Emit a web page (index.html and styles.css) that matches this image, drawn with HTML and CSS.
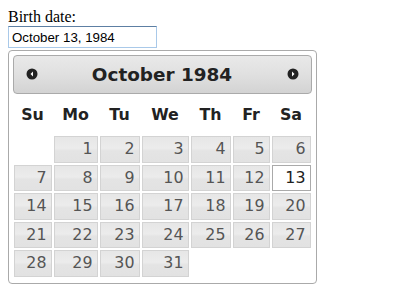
FILE: index.html
```html
<!DOCTYPE HTML>
<html>

<head>
  <meta charset="UTF-8">
  <title>Birth date</title>
  <link rel="stylesheet" href="styles.css">
</head>

<body>
  <div class="field">
    <label for="birth">Birth date:</label>
    <input id="birth" class="date-input" type="text" value="October 13, 1984">
  </div>

  <div class="picker">
    <div class="picker-head">
      <a class="nav prev" title="Prev">
        <svg width="12" height="12" viewBox="0 0 12 12"><circle cx="6" cy="6" r="5.5" fill="#222"/><path d="M7 3.5 L4.5 6 L7 8.5 Z" fill="#fff"/></svg>
      </a>
      <div class="picker-title">October 1984</div>
      <a class="nav next" title="Next">
        <svg width="12" height="12" viewBox="0 0 12 12"><circle cx="6" cy="6" r="5.5" fill="#222"/><path d="M5 3.5 L7.5 6 L5 8.5 Z" fill="#fff"/></svg>
      </a>
    </div>
    <table class="days">
      <colgroup>
        <col class="c1"><col class="c2"><col class="c3"><col class="c4"><col class="c5"><col class="c6"><col class="c7">
      </colgroup>
      <thead>
        <tr><th>Su</th><th>Mo</th><th>Tu</th><th>We</th><th>Th</th><th>Fr</th><th>Sa</th></tr>
      </thead>
      <tbody>
        <tr><td></td><td><a>1</a></td><td><a>2</a></td><td><a>3</a></td><td><a>4</a></td><td><a>5</a></td><td><a>6</a></td></tr>
        <tr><td><a>7</a></td><td><a>8</a></td><td><a>9</a></td><td><a>10</a></td><td><a>11</a></td><td><a>12</a></td><td><a class="active">13</a></td></tr>
        <tr><td><a>14</a></td><td><a>15</a></td><td><a>16</a></td><td><a>17</a></td><td><a>18</a></td><td><a>19</a></td><td><a>20</a></td></tr>
        <tr><td><a>21</a></td><td><a>22</a></td><td><a>23</a></td><td><a>24</a></td><td><a>25</a></td><td><a>26</a></td><td><a>27</a></td></tr>
        <tr><td><a>28</a></td><td><a>29</a></td><td><a>30</a></td><td><a>31</a></td><td></td><td></td><td></td></tr>
      </tbody>
    </table>
  </div>
</body>

</html>
```
FILE: styles.css
```css
body {
  margin: 8px;
  background: #fff;
  font-family: "Liberation Serif", serif;
  font-size: 16px;
}

.field label {
  display: block;
  line-height: 18px;
}

.date-input {
  display: block;
  box-sizing: border-box;
  width: 149px;
  height: 22px;
  margin: 0;
  padding: 1px 3px;
  border: 1px solid #a9c9e9;
  border-top-color: #5d7fa3;
  font-family: "Liberation Sans", Arial, sans-serif;
  font-size: 13.3px;
  color: #000;
  outline: none;
}

.picker {
  width: 299px;
  margin-top: 2px;
  padding: 4px 4px 0 3.5px;
  border: 1px solid #aaa;
  border-radius: 4px;
  font-family: "DejaVu Sans", Verdana, sans-serif;
  font-size: 17.6px;
  color: #222;
}

.picker-head {
  position: relative;
  padding: 3px 0;
  border: 1px solid #aaa;
  border-radius: 4px;
  background: linear-gradient(to bottom, #e9e9e9 0, #e0e0e0 50%, #d3d3d3 100%);
}

.picker-title {
  margin: 0 2.3em;
  line-height: 31px;
  text-align: center;
  font-size: 18.4px;
  font-weight: bold;
  color: #222;
}

.nav {
  position: absolute;
  top: 12px;
  width: 12px;
  height: 12px;
  cursor: pointer;
}

.nav svg {
  display: block;
}

.prev {
  left: 12px;
}

.next {
  right: 12px;
}

.days {
  width: 299px;
  table-layout: fixed;
  border-collapse: collapse;
  margin: 0 0 5px;
  font-size: 15.84px;
}

.c1 { width: 40px; }
.c2 { width: 46px; }
.c3 { width: 42px; }
.c4 { width: 49px; }
.c5 { width: 42px; }
.c6 { width: 39px; }
.c7 { width: 41px; }

.days th {
  padding: 11px 0;
  line-height: 19px;
  text-align: center;
  font-weight: bold;
  color: #222;
}

.days td {
  padding: 1px;
}

.days td a {
  display: block;
  padding: 3px 4px 3px 3px;
  line-height: 18.5px;
  border: 1px solid #d3d3d3;
  background: linear-gradient(to bottom, #e6e6e6 0, #ececec 45%, #e4e4e4 55%, #e2e2e2 100%);
  text-align: right;
  color: #555;
  text-decoration: none;
}

.days td a.active {
  border-color: #aaa;
  background: #fff;
  color: #212121;
}
```
